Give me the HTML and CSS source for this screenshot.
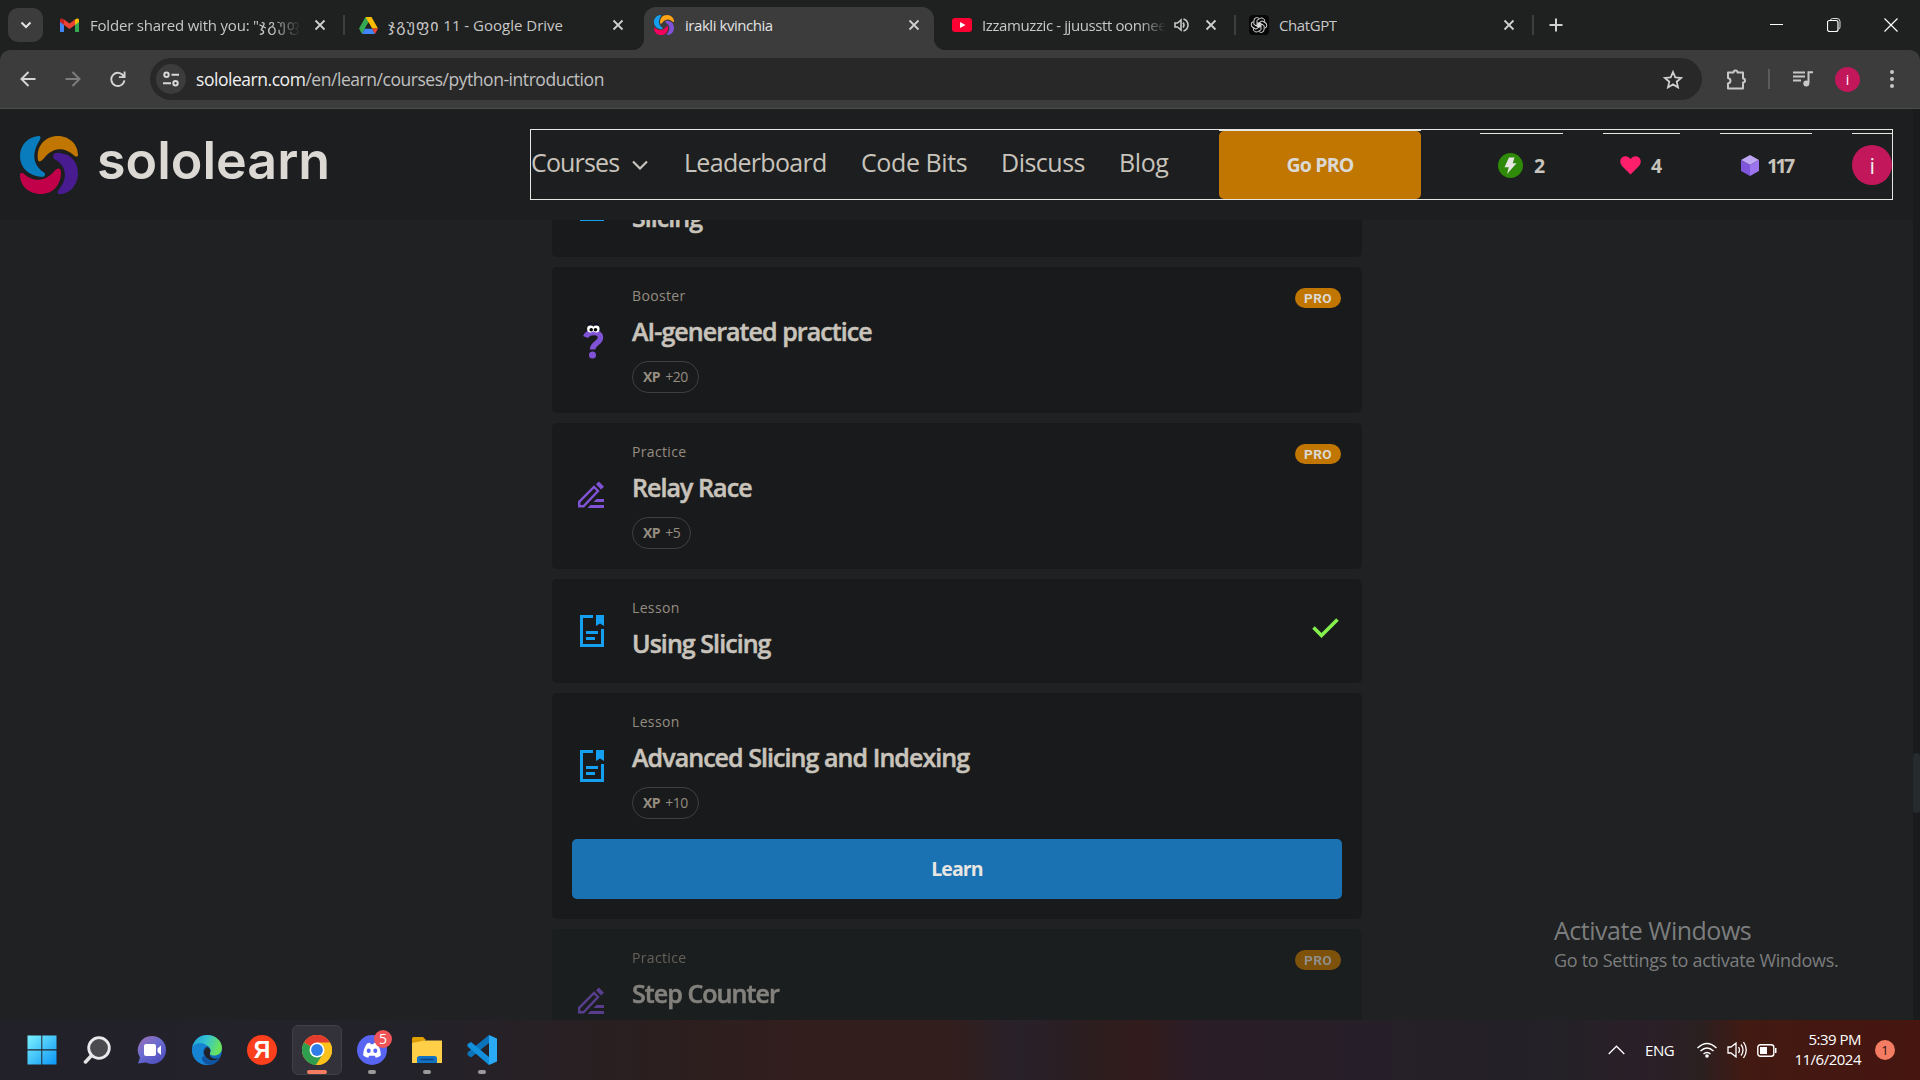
FILE: index.html
```html
<!DOCTYPE html>
<html lang="en">
<head>
<meta charset="utf-8">
<title>irakli kvinchia</title>
<link rel="stylesheet" href="styles.css">
</head>
<body>
<svg width="0" height="0" class="defs">
  <defs>
    <symbol id="close" viewBox="0 0 12 12"><path d="M1.5 1.5l9 9M10.500 1.500l-9 9" stroke="currentColor" stroke-width="1.8" fill="none"/></symbol>
    <symbol id="lesson" viewBox="0 0 24 32"><path d="M13 1.500H1.500v29h21V14" fill="none" stroke="#149ff0" stroke-width="3"/><path d="M16 0h8v11l-4-2.500L16 11z" fill="#149ff0"/><path d="M6 17.500h12M6 23.500h9" stroke="#149ff0" stroke-width="3"/></symbol>
    <symbol id="pen" viewBox="0 0 26 26"><path d="M1.200 24.800v-4.500L16 5.500l4 4L5.500 24.800z" fill="none" stroke="#8053d6" stroke-width="2.400"/><path d="M18 2.800L20.800 0 26 5.200 23 8zM18.500 17.500H26v3H15.500zM12.500 23.500H26v3H9.500z" fill="#8053d6"/></symbol>
    <symbol id="swirl" viewBox="0 0 58 58">
      <path class="s-blue" d="M18.500 0C8 1 0 9 0 20c0 12 9 20 22 21 3 0 4-3 2-4.500C12 28 12 17 19.500 4.500 21 2 21 0 18.500 0z"/>
      <path class="s-gold" d="M18 24C16 10 25 0 38 0c12 0 20 9 20 19 0 2-2.500 2-4.500 0-9-8-20-8-28.500 2-3 4-6 6-7 3z"/>
      <path class="s-violet" d="M36 17c13-1 22 8 22 20 0 13-9 21-18 21-3 0-3-2-1-4.500 9-11 8-23-4-30-3-2-2-6.500 1-6.500z"/>
      <path class="s-red" d="M0 39c0-2.500 2.500-2.500 4.500-.5 9 7.500 20 7.500 29-2.500 3-4 7-5 7.500 0 0 13-8 22-20 22C8 58 0 49 0 39z"/>
    </symbol>
  </defs>
</svg>

<div class="tabstrip">
  <span class="tab-search"><svg width="12" height="8" viewBox="0 0 12 8"><path d="M1.500 1.500L6 6l4.500-4.500" fill="none" stroke="#e3e3e3" stroke-width="2"/></svg></span>
  <div class="tab tab-mail">
    <svg class="fav" width="19" height="14" viewBox="0 0 19 14"><path d="M0 2v12h4V5z" fill="#4285f4"/><path d="M19 2v12h-4V5z" fill="#34a853"/><path d="M15 1.500C17 0 19 0 19 2.500V4l-4 3z" fill="#fbbc04"/><path d="M4 1.500C2 0 0 0 0 2.500V4l4 3z" fill="#c5221f"/><path d="M4 1.500l5.500 4 5.500-4V7l-5.500 4L4 7z" fill="#ea4335"/></svg>
    <span class="title faded t1">Folder shared with you: "<span class="geo">ჯგუფ</span></span>
    <svg class="x" width="12" height="12"><use href="#close"/></svg>
  </div>
  <i class="divider"></i>
  <div class="tab tab-drive">
    <svg class="fav" width="19" height="17" viewBox="0 0 19 17"><path d="M6.500 0h6L6 11.500 3 17 0 11.500z" fill="#34a853"/><path d="M6.500 0h6L19 11.500h-6z" fill="#fbbc04"/><path d="M6 11.500h7l3 5.500H3z" fill="#4285f4"/><path d="M13 11.500h6L16 17z" fill="#ea4335"/><path d="M9.500 5.500l3.500 6H6z" fill="#1f2020"/></svg>
    <span class="title t2"><span class="geo">ჯგუფი</span> 11 - Google Drive</span>
    <svg class="x" width="12" height="12"><use href="#close"/></svg>
  </div>
  <div class="tab tab-active">
    <svg class="fav bright" width="20" height="20"><use href="#swirl"/></svg>
    <span class="title t3">irakli kvinchia</span>
    <svg class="x" width="12" height="12"><use href="#close"/></svg>
  </div>
  <div class="tab tab-video">
    <svg class="fav" width="20" height="14" viewBox="0 0 20 14"><rect width="20" height="14" rx="3" fill="#ff0033"/><path d="M8 4l5.500 3L8 10z" fill="#fff"/></svg>
    <span class="title faded t4">Izzamuzzic - jjuusstt oonnee</span>
    <svg class="sound" width="15" height="14" viewBox="0 0 15 14"><path d="M1 5h2.500L7 2v10L3.500 9H1z" fill="none" stroke="#c7c7c7" stroke-width="1.600"/><path d="M9 4.500q2 2.500 0 5M9.500 1C15.500 3 15.500 11 9.500 13" fill="none" stroke="#c7c7c7" stroke-width="1.600"/></svg>
    <svg class="x" width="12" height="12"><use href="#close"/></svg>
  </div>
  <i class="divider"></i>
  <div class="tab tab-chat">
    <svg class="fav" width="20" height="20" viewBox="0 0 20 20"><rect width="20" height="20" rx="4" fill="#080808"/><g fill="none" stroke="#e8e8e8" stroke-width=".9"><path id="petal" d="M8 5.200l3.200-1.800a3 3 0 0 1 4.400 3.300M8 5.200v4.600l4 2.300M8 7.600"/><use href="#petal" transform="rotate(60 10 10)"/><use href="#petal" transform="rotate(120 10 10)"/><use href="#petal" transform="rotate(180 10 10)"/><use href="#petal" transform="rotate(240 10 10)"/><use href="#petal" transform="rotate(300 10 10)"/></g></svg>
    <span class="title t5">ChatGPT</span>
    <svg class="x" width="12" height="12"><use href="#close"/></svg>
  </div>
  <i class="divider"></i>
  <svg class="plus" width="14" height="14" viewBox="0 0 14 14"><path d="M7 .5v13M.5 7h13" stroke="#d0d0d0" stroke-width="2"/></svg>
  <div class="window-controls">
    <svg width="14" height="14" viewBox="0 0 14 14"><path d="M0 6.500h13" stroke="#fff"/></svg>
    <svg width="14" height="14" viewBox="0 0 14 14"><path d="M3.500 2.500V2Q4 .5 5.500 .5H10Q13 .5 13 3.500V9q0 2-1.500 2" fill="none" stroke="#ddd"/><rect x=".5" y="2.500" width="10.500" height="11" rx="2" fill="none" stroke="#fff" stroke-width="1.200"/></svg>
    <svg width="14" height="14" viewBox="0 0 14 14"><path d="M.5 .5l13 13M13.500 .5l-13 13" stroke="#fff" stroke-width="1.200"/></svg>
  </div>
</div>

<div class="toolbar-wrap">
<div class="toolbar">
  <svg class="back" width="16" height="16" viewBox="0 0 16 16"><path d="M15.500 8H2M8.500 1L1.500 8l7 7" fill="none" stroke="#d4d4d4" stroke-width="2"/></svg>
  <svg class="forward" width="16" height="16" viewBox="0 0 16 16"><path d="M.5 8H14M7.500 1l7 7-7 7" fill="none" stroke="#7d7d7d" stroke-width="2"/></svg>
  <svg class="reload" width="16" height="16" viewBox="0 0 17 17"><path d="M14.500 5.500A7 7 0 1 0 15.300 10M15.500 .5V6.500H9.500" fill="none" stroke="#d4d4d4" stroke-width="2"/></svg>
  <div class="omnibox">
    <span class="site-info"><svg width="16" height="16" viewBox="0 0 16 16"><circle cx="3.500" cy="3.800" r="2.200"/><circle cx="12.500" cy="12.200" r="2.200"/><path d="M8.500 3.800H16M0 12.200h8"/></svg></span>
    <span class="url"><b>sololearn.com</b>/en/learn/courses/python-introduction</span>
    <svg class="star" width="20" height="19" viewBox="0 0 20 19"><path d="M10 2l2.300 5.400 5.800.5-4.400 3.800 1.300 5.700-5-3-5 3 1.300-5.700L1.900 7.900l5.800-.5z" fill="none" stroke="#cfcfcf" stroke-width="1.800"/></svg>
  </div>
  <svg class="ext" width="21" height="21" viewBox="0 0 21 21"><path d="M2 3.500h5.500q0-2 2-2t2 2H17v6q2 0 2 2t-2 2v6H2V14.500q2.500-.5 2.500-2.700T2 9z" fill="none" stroke="#c7c7c7" stroke-width="2" stroke-linejoin="round"/></svg>
  <i class="bar"></i>
  <svg class="media" width="20" height="16" viewBox="0 0 20 16"><path d="M0 1.500h12M0 5.500h12M0 9.500h8M15.500 12V1.200H20" fill="none" stroke="#c7c7c7" stroke-width="2"/><circle cx="13.300" cy="12.500" r="3" fill="#c7c7c7"/></svg>
  <span class="me">i</span>
  <svg class="dots" width="4" height="18" viewBox="0 0 4 18"><circle cx="2" cy="2" r="2"/><circle cx="2" cy="9" r="2"/><circle cx="2" cy="16" r="2"/></svg>
</div>
</div>

<div class="viewport">
  <div class="page">
    <header class="site-header">
      <svg class="logo" width="58" height="58"><use href="#swirl"/></svg>
      <span class="wordmark">sololearn</span>
      <nav class="nav">
        <a class="n1">Courses</a>
        <svg class="chev" width="16" height="10" viewBox="0 0 16 10"><path d="M1 1.500l7 7 7-7" fill="none" stroke="#c8c3bb" stroke-width="2.200"/></svg>
        <a class="n2">Leaderboard</a><a class="n3">Code Bits</a><a class="n4">Discuss</a><a class="n5">Blog</a>
        <div class="go-wrap"><span class="go">Go PRO</span></div>
        <div class="stat s1"><svg width="25" height="25" viewBox="0 0 25 25"><circle cx="12.500" cy="12.500" r="12.500" fill="#2f8a0a"/><path d="M11 4.500h5.500l-1.800 5.800h3.800L9 21l1.800-6.800H6.500z" fill="#e8e6e3"/></svg><span>2</span></div>
        <div class="stat s2"><svg width="21" height="19" viewBox="0 0 21 19"><path d="M10.500 18.500L2 10C-1.500 6 .5.300 5.700.300q3 0 4.800 2.700Q12.300.300 15.300.300C20.500.300 22.500 6 19 10z" fill="#ff1f6b"/></svg><span>4</span></div>
        <div class="stat s3"><svg width="18" height="21" viewBox="0 0 18 21"><path d="M9 0l9 5-9 5-9-5z" fill="#bda6f2"/><path d="M0 5l9 5v11l-9-5z" fill="#7f55dc"/><path d="M18 5l-9 5v11l9-5z" fill="#9c74ee"/></svg><span>117</span></div>
        <div class="stat s4"><span class="avatar">i</span></div>
      </nav>
    </header>
    <main class="lessons">
      <section class="card cut">
        <div class="ico"><svg width="24" height="32"><use href="#lesson"/></svg></div>
        <div class="body"><small>Lesson</small><h3>Slicing</h3></div>
      </section>
      <section class="card">
        <div class="ico q"><svg width="21" height="37" viewBox="0 0 21 37"><path d="M2.500 15C5 9.500 17.500 8.500 17.500 15.500c0 5.500-8 6-8 12" fill="none" stroke="#8053d6" stroke-width="5.400"/><circle cx="9.500" cy="33" r="3.500" fill="#8053d6"/><path d="M5.500 2l3-1M11 1.500l4 1" stroke="#0b0b28" stroke-width="2"/><circle cx="7.500" cy="7" r="3.400" fill="#fff"/><circle cx="13.200" cy="7" r="3.400" fill="#fff"/><circle cx="8.200" cy="7.800" r="1.800"/><circle cx="12.500" cy="7.800" r="1.800"/></svg></div>
        <div class="body"><small>Booster</small><h3>AI-generated practice</h3><span class="chip"><b>XP</b> +20</span></div>
        <span class="pro">PRO</span>
      </section>
      <section class="card">
        <div class="ico pen"><svg width="26" height="27"><use href="#pen"/></svg></div>
        <div class="body"><small>Practice</small><h3>Relay Race</h3><span class="chip"><b>XP</b> +5</span></div>
        <span class="pro">PRO</span>
      </section>
      <section class="card short">
        <div class="ico"><svg width="24" height="32"><use href="#lesson"/></svg></div>
        <div class="body"><small>Lesson</small><h3>Using Slicing</h3></div>
        <svg class="check" width="27" height="21" viewBox="0 0 27 21"><path d="M1.500 9.500l8 8L25.500 1.500" fill="none" stroke="#85f04c" stroke-width="3.600"/></svg>
      </section>
      <section class="card tall">
        <div class="row">
          <div class="ico"><svg width="24" height="32"><use href="#lesson"/></svg></div>
          <div class="body"><small>Lesson</small><h3>Advanced Slicing and Indexing</h3><span class="chip"><b>XP</b> +10</span></div>
        </div>
        <div class="learn"><span>Learn</span></div>
      </section>
      <section class="card locked">
        <div class="ico pen"><svg width="26" height="27"><use href="#pen"/></svg></div>
        <div class="body"><small>Practice</small><h3>Step Counter</h3></div>
        <span class="pro">PRO</span>
      </section>
    </main>
  </div>
  <div class="scrollbar"><i></i></div>
  <div class="watermark"><p class="w1">Activate Windows</p><p class="w2">Go to Settings to activate Windows.</p></div>
</div>

<div class="taskbar">
  <div class="apps">
    <span class="app"><svg width="30" height="30" viewBox="0 0 30 30"><defs><linearGradient id="win" gradientUnits="userSpaceOnUse" x1="0" y1="0" x2="30" y2="30"><stop offset="0" stop-color="#7df3ff"/><stop offset="1" stop-color="#0a94f5"/></linearGradient></defs><path d="M.5 .5H14.300V14.300H.5zM15.300 .5H29.500V14.300H15.300zM.5 15.500H14.300V29.500H.5zM15.300 15.500H29.500V29.500H15.300z" fill="url(#win)"/></svg></span>
    <span class="app"><svg width="28" height="28" viewBox="0 0 28 28"><path d="M9.500 18.500L2.500 26" stroke="#e4e4e4" stroke-width="3.500" stroke-linecap="round"/><circle cx="16" cy="12" r="10.300" fill="#4b4a4e" stroke="#e8eaec" stroke-width="2.800"/></svg></span>
    <span class="app"><svg width="30" height="30" viewBox="0 0 30 30"><defs><linearGradient id="meet" x1="0" y1="0" x2=".7" y2="1"><stop offset="0" stop-color="#a06fb0"/><stop offset=".5" stop-color="#6a6cd0"/><stop offset="1" stop-color="#5050c0"/></linearGradient></defs><path d="M15 1a14 14 0 1 1 0 28q-4-.2-6-1.500L1 28.500l2-6A14 14 0 0 1 15 1z" fill="url(#meet)"/><rect x="7" y="9" width="12" height="12" rx="2" fill="#fff"/><path d="M20.500 13.500l3.500-3v9.500l-3.500-3z" fill="#fff"/></svg></span>
    <span class="app"><svg width="30" height="30" viewBox="0 0 30 30"><defs><linearGradient id="e1" x1="0" y1="0" x2="1" y2=".3"><stop offset="0" stop-color="#1c9ad8"/><stop offset=".5" stop-color="#35c3d2"/><stop offset="1" stop-color="#6ae35c"/></linearGradient></defs><circle cx="15" cy="15" r="15" fill="#1267b8"/><path d="M0 13C2 4 8 0 15 0c9 0 15 6 15 13 0 5-4 7.500-8 7.500-3 0-5-1-4-2.500 2-4-1-8-6-8C7 8 2 9 0 13z" fill="url(#e1)"/><path d="M0 15C0 9 10 5 15 11c-4 1-5 6-3 10 2 5 7 8 12 6-3 2-6 3-9 3C6 30 0 23 0 15z" fill="#1684d2"/><path d="M15 12c-3 2-4 5-2 9 3 5 10 6 15 2-7 2-11-1-10-5 1-3 0-5-3-6z" fill="#202129"/><path d="M12 21c3 6 10 6 16 2-3 6-9 8-14 6-5-3-5-7-2-8z" fill="#0e54a2"/></svg></span>
    <span class="app"><span class="ya">Я</span></span>
    <span class="app current"><svg width="30" height="30" viewBox="0 0 30 30"><circle cx="15" cy="15" r="15" fill="#fcc21c"/><path d="M15 15L2 7.500A15 15 0 0 1 28 7.500z" fill="#e33b2e"/><path d="M15 15L2 7.500A15 15 0 0 0 14 30l7.500-12z" fill="#2f9e4f"/><path d="M15 7.500h13A15 15 0 0 1 14 30l7.500-11z" fill="#fcc21c"/><circle cx="15" cy="15" r="7.500" fill="#fff"/><circle cx="15" cy="15" r="5.900" fill="#2f7de9"/></svg><i></i></span>
    <span class="app open"><svg width="30" height="30" viewBox="0 0 30 30"><circle cx="15" cy="15" r="15" fill="#5865f2"/><path d="M10 8.500l3-.8.8 1.500h2.400l.8-1.500 3 .8q4 5.500 3.800 12-2.500 2-5 2.200l-1-2h-5.600l-1 2q-2.500-.2-5-2.200-.2-6.500 3.800-12z" fill="#fff"/><ellipse cx="11.700" cy="15.800" rx="2" ry="2.200" fill="#5865f2"/><ellipse cx="18.300" cy="15.800" rx="2" ry="2.200" fill="#5865f2"/></svg><em>5</em><i></i></span>
    <span class="app open"><svg width="30" height="27" viewBox="0 0 30 27"><path d="M0 1.500Q0 0 1.500 0H11l3 3H0z" fill="#e0a000"/><path d="M0 3h13v4H0z" fill="#d99a08"/><path d="M0 6l12-2.500h18V26H0z" fill="#ffcf48"/><path d="M5 26v-4.500q0-2.500 2.500-2.500h15q2.500 0 2.500 2.500V26z" fill="#1273c4"/><path d="M8.500 22.500h13" stroke="#0a4480" stroke-width="1.500"/></svg><i></i></span>
    <span class="app open"><svg width="30" height="30" viewBox="0 0 30 30"><path d="M22 0v8L4 22.500 .5 20v-2.500z" fill="#0b73ba"/><path d="M4 7L22 22v8L.5 11.500V9z" fill="#1290dc"/><path d="M22 0l8 3.500v23L22 30z" fill="#2aaaf5"/></svg><i></i></span>
  </div>
  <div class="tray">
    <svg class="up" width="17" height="10" viewBox="0 0 17 10"><path d="M.7 9L8.500 1.200 16.300 9" fill="none" stroke="#fff" stroke-width="1.300"/></svg>
    <span class="lang">ENG</span>
    <svg class="wifi" width="20" height="16" viewBox="0 0 20 16"><path d="M.5 6Q10-3 19.500 6M3.500 9q6.500-6 13 0M6.500 12q3.500-3 7 0" fill="none" stroke="#fff" stroke-width="1.400"/><circle cx="10" cy="14" r="1.800" fill="#fff"/></svg>
    <svg class="vol" width="20" height="18" viewBox="0 0 20 18"><path d="M1 6h3l5-4v14l-5-4H1zM11.500 6q2 3 0 6M14 3.500q4 5.500 0 11M16.500 1q5.500 8 0 16" fill="none" stroke="#fff" stroke-width="1.300"/></svg>
    <svg class="bat" width="20" height="13" viewBox="0 0 20 13"><rect x=".8" y=".8" width="16" height="11.400" rx="2.500" fill="none" stroke="#fff" stroke-width="1.400"/><rect x="3" y="3" width="7" height="7" fill="#fff"/><path d="M18 4h1.500v5H18z" fill="#fff"/></svg>
    <div class="clock"><span>5:39 PM</span><span>11/6/2024</span></div>
    <span class="count">1</span>
  </div>
</div>
</body>
</html>
```
FILE: styles.css
```css
* { box-sizing: border-box; }
body {
  margin: 0;
  width: 1920px;
  height: 1080px;
  overflow: hidden;
  background: #1f2122;
  display: flex;
  flex-direction: column;
  font-family: "Open Sans", "Noto Sans", "DejaVu Sans", sans-serif;
  color: #c8c3bb;
}
svg { display: block; flex: none; }
.defs { position: absolute; }
p, h3 { margin: 0; }

/* tab strip */
.tabstrip { height: 50px; flex: none; display: flex; align-items: center; background: #1f2020; padding-left: 8px; }
.tab-search { width: 35px; height: 34px; border-radius: 10px; background: #3c3c3c; display: grid; place-items: center; flex: none; }
.tab { display: flex; align-items: center; height: 43px; flex: none; }
.title { white-space: nowrap; overflow: hidden; font-size: 15px; line-height: 24px; color: #c7c7c7; margin-left: 10px; }
.geo { font-family: "DejaVu Sans", sans-serif; font-size: 16px; letter-spacing: 1px; }
.faded { -webkit-mask-image: linear-gradient(90deg, #000 86%, transparent); mask-image: linear-gradient(90deg, #000 86%, transparent); }
.x, .sound { color: #cfcfcf; }
.x { margin-left: auto; }
.divider { width: 2px; height: 20px; background: #3d3f3f; flex: none; }
.tab-mail { margin-left: 17px; width: 266px; }
.t1 { width: 211px; letter-spacing: -.2px; margin-left: 11px; }
.tab-drive { margin-left: 14px; width: 265px; }
.t2 { letter-spacing: 0; }
.tab-active { align-self: flex-end; background: #3c3c3c; width: 290px; border-radius: 12px 12px 0 0; margin-left: 20px; padding: 0 14px 7px 10px; position: relative; }
.tab-active::before, .tab-active::after { content: ""; position: absolute; bottom: 0; width: 12px; height: 12px; }
.tab-active::before { left: -12px; background: radial-gradient(circle at 0 0, transparent 12px, #3c3c3c 12.500px); }
.tab-active::after { right: -12px; background: radial-gradient(circle at 100% 0, transparent 12px, #3c3c3c 12.500px); }
.t3 { color: #e3e3e3; letter-spacing: -.45px; margin-left: 11px; }
.tab-video { margin-left: 18px; width: 265px; }
.t4 { width: 184px; letter-spacing: -.4px; }
.sound { margin-left: 8px; }
.tab-video + .divider { margin-left: 17px; }
.tab-mail + .divider { margin-left: 17px; }
.tab-chat { margin-left: 13px; width: 266px; }
.tab-chat + .divider { margin-left: 17px; }
.t5 { letter-spacing: -.4px; }
.plus { margin-left: 15px; }
.window-controls { margin-left: auto; margin-right: 22px; display: flex; gap: 43px; }

/* toolbar */
.toolbar-wrap { flex: none; background: #1f2020; }
.toolbar { height: 59px; background: #3c3c3c; border-radius: 10px 10px 0 0; border-bottom: 1px solid #4a4b4b; display: flex; align-items: center; padding: 0 26px 0 20px; }
.forward { margin-left: 29px; }
.reload { margin-left: 29px; }
.omnibox { margin-left: 24px; width: 1552px; height: 42px; border-radius: 21px; background: #282828; display: flex; align-items: center; padding: 0 19px 0 6px; }
.site-info { width: 30px; height: 30px; border-radius: 50%; background: #3c3c3c; display: grid; place-items: center; }
.site-info svg { fill: none; stroke: #d8d8d8; stroke-width: 2; }
.url { font-size: 17.500px; margin-left: 10px; color: #c0c0c0; letter-spacing: -.46px; white-space: nowrap; }
.url b { font-weight: 400; color: #f0f0f0; }
.star { margin-left: auto; }
.ext { margin-left: 24px; }
.bar { width: 2px; height: 20px; background: #5c5c5c; margin-left: 21px; }
.media { margin-left: 23px; }
.me { width: 25px; height: 25px; border-radius: 50%; background: #c2185b; color: #fff; font-size: 14px; display: grid; place-items: center; margin-left: 22px; }
.dots { margin-left: auto; fill: #c7c7c7; }

/* page */
.viewport { flex: none; height: 911px; display: flex; position: relative; overflow: hidden; }
.page { flex: 1; display: flex; flex-direction: column; overflow: hidden; }
.site-header { height: 111px; flex: none; background: #1c1e1f; display: flex; align-items: center; padding: 0 20px; }
.logo { --b: #087cbc; --g: #c07600; --v: #481b90; --r: #c2004a; }
.bright { --b: #149ff0; --g: #ffa514; --v: #8053d6; --r: #f5005c; }
.s-blue { fill: var(--b); }
.s-gold { fill: var(--g); }
.s-violet { fill: var(--v); }
.s-red { fill: var(--r); }
.wordmark { font: 600 52px/60px Inter, sans-serif; color: #dcd9d4; margin: -8px 0 0 19px; width: 231px; letter-spacing: 0; }
.nav { margin-left: 202px; width: 1363px; height: 71px; border: 1px solid #e8e6e3; display: flex; align-items: center; font-size: 25px; white-space: nowrap; }
.nav a { flex: none; margin-bottom: 6px; }
.n1 { width: 88px; letter-spacing: -.85px; }
.chev { margin-left: 13px; }
.n2 { width: 142px; margin-left: 36px; letter-spacing: -.7px; }
.n3 { width: 106px; margin-left: 35px; letter-spacing: -.4px; }
.n4 { width: 83px; margin-left: 34px; letter-spacing: -.5px; }
.n5 { width: 49px; margin-left: 35px; letter-spacing: -.4px; }
.go-wrap { width: 202px; height: 69px; margin-left: 51px; border-top: 1px solid #e8e6e3; }
.go { height: 68px; border-radius: 5px; background: #c07600; color: #dcd9d4; font-weight: 700; font-size: 19.500px; display: grid; place-items: center; letter-spacing: -.85px; padding-bottom: 2px; }
.stat { height: 66px; align-self: flex-end; border-top: 1px solid #e8e6e3; display: flex; align-items: center; font-size: 19.500px; font-weight: 700; padding-bottom: 3px; letter-spacing: -.8px; flex: none; }
.s1 { width: 83px; margin-left: 59px; padding-left: 18px; gap: 11px; }
.s2 { width: 77px; margin-left: 40px; padding-left: 17px; gap: 10px; }
.s3 { width: 92px; margin-left: 40px; padding-left: 21px; gap: 8px; letter-spacing: -2.600px; }
.s4 { width: 40px; margin-left: 40px; }
.avatar { width: 40px; height: 40px; border-radius: 50%; background: #c2185b; color: #eee; font-weight: 400; font-size: 22px; display: grid; place-items: center; }

/* lesson list */
.lessons { width: 810px; margin-left: 552px; flex: 1; overflow: hidden; display: flex; flex-direction: column; gap: 10px; }
.card { height: 146px; flex: none; background: #191a1c; border-radius: 5px; padding: 20px; display: flex; align-items: flex-start; }
.ico { width: 60px; align-self: center; padding-left: 8px; }
.q { padding-left: 11px; }
.pen { padding: 0 0 3px 6px; }
.body { flex: 1; display: flex; flex-direction: column; align-items: flex-start; }
small { font-size: 14px; line-height: 17px; color: #958d80; letter-spacing: .35px; }
h3 { font: 600 25px/34px "Open Sans", sans-serif; -webkit-text-stroke: .5px currentColor; letter-spacing: -.94px; margin-top: 10px; white-space: nowrap; }
.chip { height: 32px; border: 1px solid #3c4042; border-radius: 16px; margin-top: 13px; padding: 0 10px; font-size: 14px; line-height: 30px; color: #958d80; white-space: nowrap; letter-spacing: -.5px; }
.chip b { margin-right: 2px; }
.pro { width: 46px; height: 20px; border-radius: 10px; background: #c07600; color: #dcd9d4; font: 700 13.500px/20px Roboto, sans-serif; letter-spacing: .4px; text-align: center; margin: 1px 1px 0 0; }
.cut { height: 104px; margin-top: -67px; }
.short { height: 104px; }
.check { align-self: center; margin: -5px 3px 0 0; }
.tall { height: 226px; flex-direction: column; }
.row { display: flex; height: 106px; margin-bottom: 20px; }
.learn { width: 770px; height: 60px; border-radius: 5px; background: #1b72b2; color: #e8e6e3; font-weight: 700; font-size: 19.500px; display: grid; place-items: center; letter-spacing: -.9px; padding-bottom: 1px; }
.locked { background: #1b1e1e; }
.locked > * { opacity: .6; }

.scrollbar { width: 7px; background: #191b1c; padding-top: 644px; }
.scrollbar i { display: block; height: 60px; background: #262b2d; border-radius: 4px; }
.watermark { position: absolute; left: 1554px; top: 803px; color: #7c7d7e; white-space: nowrap; }
.w1 { font-size: 25px; line-height: 36px; letter-spacing: -.5px; }
.w2 { font-size: 18px; line-height: 24px; letter-spacing: -.3px; }

/* taskbar */
.taskbar { flex: none; height: 60px; display: flex; justify-content: space-between; background: linear-gradient(90deg, #22212a 0, #242229 430px, #2b1f20 650px, #321e1d 800px, #321e1d 950px, #28212a 1020px, #2c1d1f 1090px, #321c1c 1140px, #2a1d27 1200px, #262029 1400px, #242127 1560px, #2b1f28 1650px, #2b2021 1700px, #421a12 1745px, #461510 1920px); }
.apps { display: flex; padding-left: 17px; gap: 5px; align-items: center; }
.app { width: 50px; height: 50px; display: grid; place-items: center; border-radius: 6px; position: relative; }
.current { background: #333139; border: 1px solid #403e46; }
.app i { position: absolute; bottom: 1px; left: 21px; width: 8px; height: 4px; border-radius: 2px; background: #9a9a9c; }
.current i { left: 14px; width: 20px; background: #f47c62; bottom: 0; }
.ya { width: 30px; height: 30px; border-radius: 50%; background: #fc3f1d; color: #fff; font: 700 23px/30px "Liberation Sans", sans-serif; text-align: center; }
.app em { position: absolute; left: 27px; top: 5px; width: 18px; height: 18px; border-radius: 50%; background: #ee5458; color: #fff; font: 400 14px/18px "Open Sans", sans-serif; text-align: center; }
.tray { display: flex; align-items: center; color: #fff; font-size: 15px; padding-right: 25px; }
.lang { margin-left: 20px; width: 30px; letter-spacing: -.4px; }
.wifi { margin-left: 22px; }
.vol { margin-left: 10px; }
.bat { margin-left: 10px; }
.clock { width: 84px; display: flex; flex-direction: column; text-align: right; line-height: 20px; letter-spacing: -.5px; margin-bottom: 2px; }
.count { width: 20px; height: 20px; border-radius: 50%; background: #f47c62; color: #2a1512; font-size: 13px; line-height: 20px; text-align: center; margin-left: 14px; }
```
